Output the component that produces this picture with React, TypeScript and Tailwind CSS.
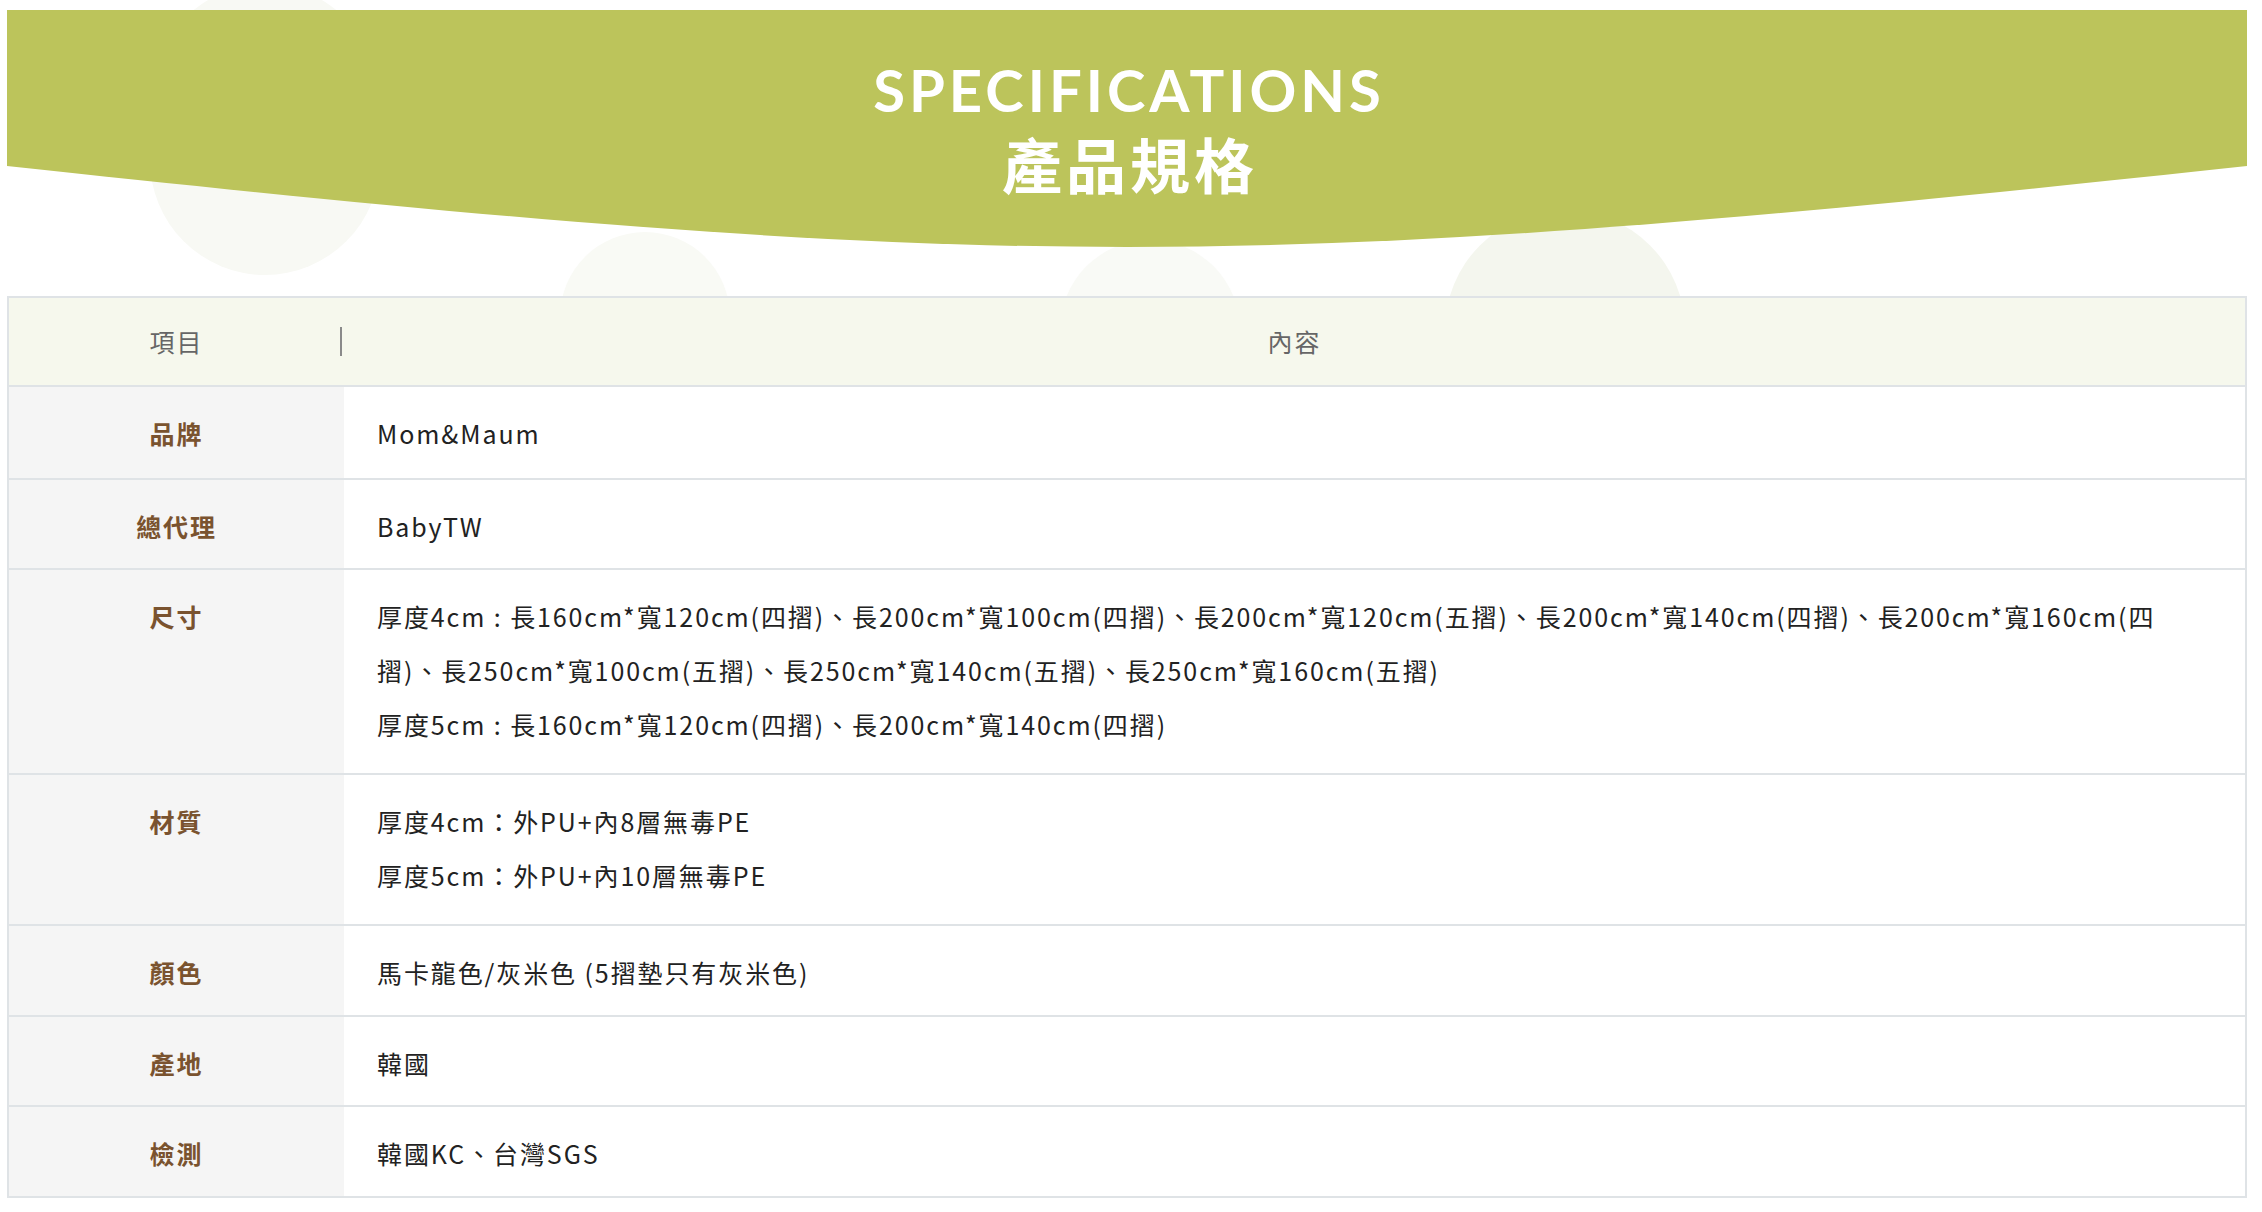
import React from 'react';

type Row = { label: string; paras: string[]; pb: string };

const rows: Row[] = [
  { label: '品牌', paras: ['Mom&Maum'], pb: 'pb-[18px]' },
  { label: '總代理', paras: ['BabyTW'], pb: 'pb-[15px]' },
  {
    label: '尺寸',
    paras: [
      '厚度4cm : 長160cm*寬120cm(四摺)、長200cm*寬100cm(四摺)、長200cm*寬120cm(五摺)、長200cm*寬140cm(四摺)、長200cm*寬160cm(四摺)、長250cm*寬100cm(五摺)、長250cm*寬140cm(五摺)、長250cm*寬160cm(五摺)',
      '厚度5cm : 長160cm*寬120cm(四摺)、長200cm*寬140cm(四摺)',
    ],
    pb: 'pb-[22px]',
  },
  { label: '材質', paras: ['厚度4cm：外PU+內8層無毒PE', '厚度5cm：外PU+內10層無毒PE'], pb: 'pb-[22px]' },
  { label: '顏色', paras: ['馬卡龍色/灰米色 (5摺墊只有灰米色)'], pb: 'pb-[16px]' },
  { label: '產地', paras: ['韓國'], pb: 'pb-[15px]' },
  { label: '檢測', paras: ['韓國KC、台灣SGS'], pb: 'pb-[16px]' },
];

export default function App() {
  return (
    <div className="relative min-h-screen overflow-hidden bg-white font-['Noto_Sans_CJK_TC','Noto_Sans',sans-serif]">
      {/* faint background bubbles */}
      <div className="absolute left-[150px] top-[-15px] h-[290px] w-[230px] rounded-full bg-[#f8f9f4]" />
      <div className="absolute left-[560px] top-[232px] h-[170px] w-[170px] rounded-full bg-[#f9faf5]" />
      <div className="absolute left-[1060px] top-[240px] h-[180px] w-[180px] rounded-full bg-[#f9faf6]" />
      <div className="absolute left-[1445px] top-[210px] h-[240px] w-[240px] rounded-full bg-[#f4f6ee]" />

      <div className="relative pl-[7px] pt-[10px] pb-[14px]">
        {/* title banner */}
        <div className="relative flex h-[237px] w-[2240px] flex-col items-center text-white">
          <svg className="absolute inset-0" width="2240" height="237" viewBox="0 0 2240 237">
            <path d="M0 0H2240V156C1240 264 1000 264 0 156Z" fill="#bcc45b" />
          </svg>
          <h2 className="relative mt-[51px] pl-[4px] font-['Lato',sans-serif] text-[58px] font-bold leading-none tracking-[4px]">
            SPECIFICATIONS
          </h2>
          <h3 className="relative mt-[14px] pl-[6px] text-[60px] font-bold leading-none tracking-[4px]">產品規格</h3>
        </div>

        {/* spec table */}
        <div className="mt-[49px] w-[2240px] border-2 border-[#dfe3e6] text-[25px] tracking-[1.9px]">
          <div className="flex h-[89px] items-center border-b-2 border-[#dfe3e6] bg-[#f6f8ed] text-[#666]">
            <div className="relative flex h-full w-[335px] items-center justify-center">
              <span>項目</span>
              <span className="absolute right-[2px] top-[29px] h-[29px] w-[2px] bg-[#8a8a8a]" />
            </div>
            <div className="flex-1 text-center">內容</div>
          </div>
          {rows.map((r, i) => (
            <div
              key={r.label}
              className={`flex ${i < rows.length - 1 ? 'border-b-2 border-[#dfe3e6]' : ''}`}
            >
              <div className={`w-[335px] shrink-0 bg-[#f5f5f5] pt-[19px] ${r.pb} text-center font-bold leading-[54px] text-[#7a532f]`}>
                {r.label}
              </div>
              <div className={`flex-1 bg-white pl-[33px] pr-[66px] pt-[19px] ${r.pb} leading-[54px] text-[#222]`}>
                {r.paras.map((p) => (
                  <p key={p}>{p}</p>
                ))}
              </div>
            </div>
          ))}
        </div>
      </div>
    </div>
  );
}
